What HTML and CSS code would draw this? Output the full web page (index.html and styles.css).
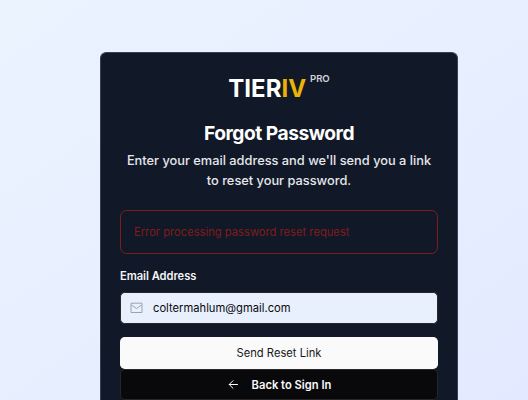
FILE: index.html
```html
<!DOCTYPE html>
<html lang="en">
<head>
<meta charset="utf-8">
<title>Forgot Password</title>
<link rel="stylesheet" href="styles.css">
</head>
<body>
<main class="card">
  <header class="header">
    <div class="logo"><span class="brand">TIER<span class="accent">IV</span></span><span class="pro">PRO</span></div>
    <h1 class="title">Forgot Password</h1>
    <p class="description">Enter your email address and we'll send you a link to reset your password.</p>
  </header>
  <div class="alert" role="alert">Error processing password reset request</div>
  <form class="form">
    <label class="label" for="email">Email Address</label>
    <div class="field">
      <svg class="mail" viewBox="0 0 13 13" fill="none" stroke="currentColor" stroke-linejoin="round"><path d="M1 2.2h11v9.3H1zM1.5 4l5 3.5 5-3.5"/></svg>
      <input class="input" id="email" type="email" value="coltermahlum@gmail.com">
    </div>
    <button class="button primary" type="button">Send Reset Link</button>
    <button class="button back" type="button">
      <svg class="arrow" viewBox="0 0 13 13" fill="none" stroke="currentColor" stroke-linecap="round" stroke-linejoin="round"><path d="M10.5 6.5H2.3M6 2.7L2.2 6.5 6 10.3"/></svg>
      <span>Back to Sign In</span>
    </button>
  </form>
</main>
</body>
</html>
```
FILE: styles.css
```css
* {
  box-sizing: border-box;
}

html {
  height: 100%;
  overflow: hidden;
}

body {
  height: 100%;
  margin: 0;
  padding: 52px 0 0 100px;
  overflow: hidden;
  font-family: Inter, "Liberation Sans", sans-serif;
  font-size: 11.2px;
  background: linear-gradient(145deg, #ebf3ff 0%, #e8efff 50%, #e3e9ff 100%);
}

.card {
  width: 358px;
  height: 348px;
  padding: 19.2px 19px 0;
  border: 1px solid #374151;
  border-bottom: 0;
  border-radius: 6.4px 6.4px 0 0;
  background: #111827;
}

.header {
  display: flex;
  flex-direction: column;
  align-items: center;
  text-align: center;
}

.logo {
  display: flex;
  align-items: flex-start;
  height: 32px;
  color: #fff;
}

.brand {
  padding-top: 1px;
  font-size: 24px;
  line-height: 32px;
  font-weight: 700;
}

.accent {
  color: #eab308;
}

.pro {
  margin-left: 4px;
  font-size: 9.6px;
  line-height: 13px;
  font-weight: 600;
  letter-spacing: -0.1px;
  color: #d1d5db;
}

.title {
  margin: 17px 0 0;
  font-size: 19.2px;
  line-height: 25.6px;
  font-weight: 700;
  letter-spacing: -0.48px;
  color: #fff;
}

.description {
  margin: 3.8px 0 0;
  font-size: 12.8px;
  line-height: 20px;
  font-weight: 500;
  color: #e5e7eb;
}

.alert {
  height: 44px;
  margin-top: 19px;
  padding: 0 13px;
  border: 1px solid #7f1d1d;
  border-radius: 6.4px;
  line-height: 42px;
  color: #7f1d1d;
}

.form {
  display: flex;
  flex-direction: column;
}

.label {
  margin-top: 14px;
  line-height: 16px;
  font-weight: 600;
  letter-spacing: -0.05px;
  color: #f3f4f6;
}

.field {
  display: flex;
  align-items: center;
  height: 32px;
  margin: 8px 0 13px;
  padding-left: 9px;
  border: 1px solid #27272a;
  border-radius: 4.8px;
  background: #e8f0fe;
}

.mail {
  flex: none;
  width: 13px;
  height: 13px;
  color: #9ca3af;
}

.input {
  flex: 1;
  min-width: 0;
  margin-left: 10px;
  padding: 0;
  border: 0;
  outline: 0;
  background: transparent;
  font: inherit;
  color: #09090b;
}

.button {
  display: flex;
  align-items: center;
  justify-content: center;
  height: 32px;
  padding: 0;
  border: 0;
  border-radius: 4.8px;
  font: inherit;
}

.primary {
  background: #fafafa;
  color: #18181b;
}

.back {
  gap: 12px;
  height: 31px;
  padding-top: 1px;
  border: 1px solid #27272a;
  background: #09090b;
  color: #fafafa;
  font-weight: 600;
}

.arrow {
  width: 13px;
  height: 13px;
}
```
